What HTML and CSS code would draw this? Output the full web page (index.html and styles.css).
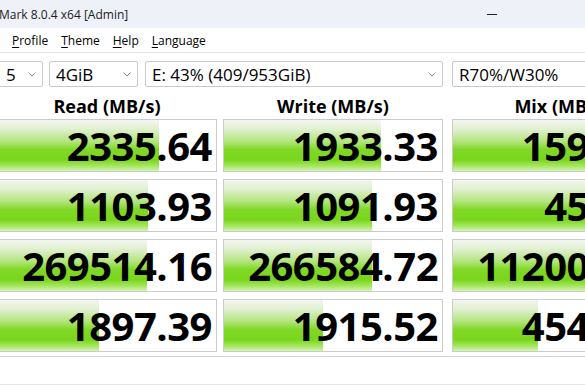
FILE: index.html
```html
<!DOCTYPE html>
<html lang="en">
  <head>
    <meta charset="UTF-8" />
    <title>CrystalDiskMark 8.0.4 x64 [Admin]</title>
    <link rel="stylesheet" href="styles.css">
  </head>
  <body>
    <div class="titlebar">
      <span class="title">Mark 8.0.4 x64 [Admin]</span>
      <span class="minimize"></span>
    </div>

    <div class="menubar">
      <span class="menu-item"><u>P</u>rofile</span>
      <span class="menu-item"><u>T</u>heme</span>
      <span class="menu-item"><u>H</u>elp</span>
      <span class="menu-item"><u>L</u>anguage</span>
    </div>

    <div class="options">
      <div class="combo combo-count">
        <span>5</span>
        <svg class="chevron" viewBox="0 0 8 5"><path d="M0.5 0.5 L4 4 L7.5 0.5" /></svg>
      </div>
      <div class="combo combo-size">
        <span>4GiB</span>
        <svg class="chevron" viewBox="0 0 8 5"><path d="M0.5 0.5 L4 4 L7.5 0.5" /></svg>
      </div>
      <div class="combo combo-drive">
        <span>E: 43% (409/953GiB)</span>
        <svg class="chevron" viewBox="0 0 8 5"><path d="M0.5 0.5 L4 4 L7.5 0.5" /></svg>
      </div>
      <div class="combo combo-mix">
        <span>R70%/W30%</span>
      </div>
    </div>

    <div class="results">
      <div class="row header">
        <div class="col read">Read (MB/s)</div>
        <div class="col write">Write (MB/s)</div>
        <div class="col mix">Mix (MB/s)</div>
      </div>

      <div class="row">
        <div class="col read cell" style="--w: 161px">2335.64</div>
        <div class="col write cell" style="--w: 157px">1933.33</div>
        <div class="col mix cell" style="--w: 160px">1594.87</div>
      </div>
      <div class="row">
        <div class="col read cell" style="--w: 150px">1103.93</div>
        <div class="col write cell" style="--w: 148px">1091.93</div>
        <div class="col mix cell" style="--w: 152px">453.62</div>
      </div>
      <div class="row">
        <div class="col read cell" style="--w: 149px">269514.16</div>
        <div class="col write cell" style="--w: 148px">266584.72</div>
        <div class="col mix cell" style="--w: 150px">112007.25</div>
      </div>
      <div class="row">
        <div class="col read cell" style="--w: 101px">1897.39</div>
        <div class="col write cell" style="--w: 99px">1915.52</div>
        <div class="col mix cell" style="--w: 85px">4542.18</div>
      </div>
    </div>

    <div class="comment"></div>
  </body>
</html>
```

FILE: styles.css
```css
body {
  margin: 0;
  width: 585px;
  height: 390px;
  overflow: hidden;
  background: #fff;
  font-family: "Open Sans", "Noto Sans", sans-serif;
  color: #000;
}

.titlebar {
  height: 28px;
  background: #eef1f7;
  display: flex;
  align-items: center;
  justify-content: space-between;
  padding-right: 88px;
}

.title {
  font-size: 12px;
  color: #1b1b1b;
  margin-left: -1px;
}

.minimize {
  width: 10px;
  height: 1px;
  background: #222;
}

.menubar {
  height: 24px;
  border-bottom: 1px solid #e3e3e3;
  display: flex;
  align-items: center;
  padding-left: 12px;
  gap: 13px;
  font-size: 12px;
}

.menu-item u {
  text-underline-offset: 2px;
}

.options {
  display: flex;
  margin: 8px 0 0 -10px;
  height: 26px;
}

.combo {
  box-sizing: border-box;
  height: 26px;
  border: 1px solid #cacaca;
  border-radius: 2px;
  display: flex;
  align-items: center;
  justify-content: space-between;
  padding: 0 6px;
  font-size: 17px;
  flex-shrink: 0;
}

.chevron {
  width: 8px;
  height: 5px;
  fill: none;
  stroke: #8a8a8a;
  stroke-width: 1;
}

.combo-count {
  width: 53px;
  padding-left: 15px;
}

.combo-size {
  width: 89px;
  margin-left: 6px;
}

.combo-drive {
  width: 298px;
  margin-left: 7px;
}

.combo-mix {
  width: 220px;
  margin-left: 9px;
}

.results {
  margin-left: -3px;
}

.row {
  display: flex;
  margin-bottom: 7px;
}

.col {
  box-sizing: border-box;
  width: 220px;
  flex-shrink: 0;
}

.write {
  margin-left: 6px;
}

.mix {
  margin-left: 9px;
}

.header {
  height: 32px;
  margin-bottom: 0;
  padding-top: 8px;
  box-sizing: border-box;
}

.header .col {
  text-align: center;
  font-size: 18px;
  font-weight: 700;
  line-height: 22px;
}

.cell {
  height: 53px;
  border: 1px solid #cbcbcb;
  background:
    linear-gradient(
        to bottom,
        #f3f6f0 0%,
        #e0f0d0 18%,
        #b2e57c 42%,
        #80d826 58%,
        #7ad61c 78%,
        #a4e65e 90%,
        #d3f3b4 100%
      )
      no-repeat left top / var(--w) 100%,
    #fff;
  text-align: right;
  padding-right: 4px;
  font-size: 40px;
  font-weight: 700;
  line-height: 51px;
  letter-spacing: -0.5px;
  color: #000;
}

.comment {
  margin-top: -3px;
  height: 27px;
  border-top: 1px solid #d2d2d2;
  border-bottom: 1px solid #e6e6e6;
}
```
